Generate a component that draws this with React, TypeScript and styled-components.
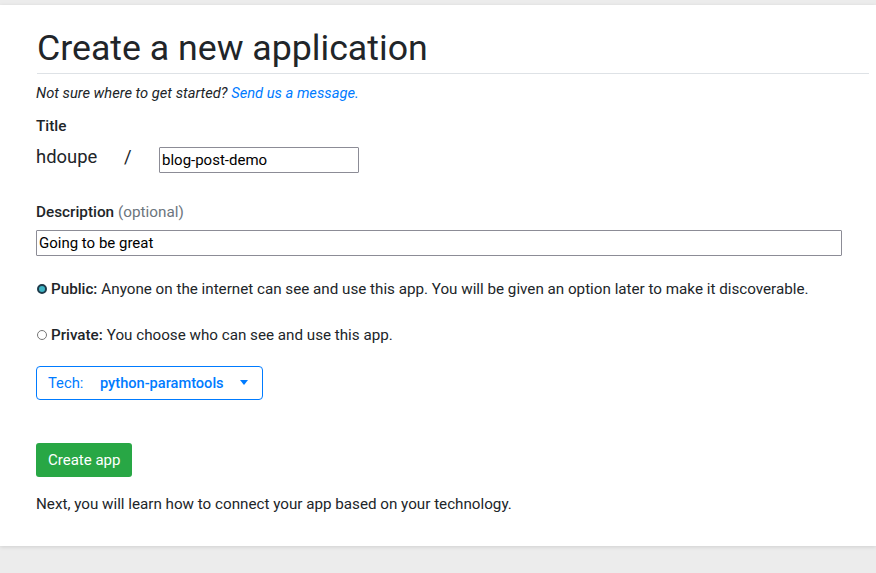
import React from "react";
import styled, { createGlobalStyle } from "styled-components";

const Global = createGlobalStyle`
  html, body { margin: 0; padding: 0; background: #ececec; }
  body { font-family: Roboto, "Liberation Sans", sans-serif; color: #212529; }
  * { box-sizing: border-box; }
`;

const Page = styled.div`
  padding-top: 5px;
  border-top: 4px solid #e6e6e6;
  margin-top: -4px;
  min-height: 573px;
`;

const Card = styled.main`
  background: #fff;
  box-shadow: 0 1px 4px rgba(0, 0, 0, 0.12);
  padding: 22px 7px 26px 36px;
  height: 541px;
`;

const Heading = styled.h1`
  font-size: 35.7px;
  font-weight: 400;
  line-height: 1.2;
  margin: 0 0 10px 1px;
  padding-bottom: 3px;
  border-bottom: 1px solid #dee2e6;
`;

const Hint = styled.p`
  font-style: italic;
  font-size: 14.7px;
  margin: 0 0 15px;
`;

const Link = styled.a`
  color: #007bff;
  text-decoration: none;
`;

const Label = styled.div`
  font-size: 15.3px;
  font-weight: 500;
  margin-bottom: 9px;
`;

const Muted = styled.span`
  color: #6c757d;
  font-weight: 400;
`;

const TitleRow = styled.div`
  display: flex;
  align-items: flex-start;
  margin-bottom: 30px;
`;

const Owner = styled.span`
  font-size: 18.4px;
  line-height: 26px;
  width: 88px;
`;

const Slash = styled.span`
  font-size: 18.4px;
  line-height: 26px;
  width: 35px;
`;

const TextInput = styled.input<{ $w: number; $drop?: number }>`
  width: ${(p) => p.$w}px;
  height: 26px;
  margin-top: ${(p) => p.$drop ?? 0}px;
  border: 1px solid #8c8c96;
  border-radius: 1px;
  font-family: Roboto, "Liberation Sans", sans-serif;
  font-size: 15px;
  padding: 0 2px;
  color: #000;
  outline: none;
`;

const Field = styled.div`
  margin-bottom: 24px;
`;

const RadioRow = styled.label`
  display: flex;
  align-items: center;
  font-size: 15.2px;
  margin-bottom: 28px;
`;

const Radio = styled.span<{ $on?: boolean }>`
  width: 10px;
  height: 10px;
  border-radius: 50%;
  margin: 0 4px 0 1px;
  border: ${(p) => (p.$on ? "2px solid #1e3a4a" : "1px solid #767676")};
  background: ${(p) => (p.$on ? "#3fb5c5" : "#fff")};
`;

const Bold = styled.b`
  font-weight: 500;
  margin-right: 4px;
`;

const Select = styled.button`
  display: flex;
  align-items: center;
  width: 227px;
  height: 34px;
  border: 1px solid #007bff;
  border-radius: 4px;
  background: #fff;
  color: #007bff;
  font-family: Roboto, "Liberation Sans", sans-serif;
  font-size: 14.8px;
  padding: 0 14px 0 11px;
  margin-top: -6px;
  margin-bottom: 43px;
`;

const SelectLabel = styled.span`
  width: 52px;
  text-align: left;
`;

const SelectValue = styled.span`
  font-weight: 500;
  font-size: 14.6px;
  flex: 1;
  text-align: left;
`;

const Caret = styled.span`
  width: 0;
  height: 0;
  border-left: 4px solid transparent;
  border-right: 4px solid transparent;
  border-top: 5px solid #007bff;
`;

const Primary = styled.button`
  background: #28a745;
  color: #fff;
  border: none;
  border-radius: 3px;
  height: 34px;
  padding: 0 12px;
  font-family: Roboto, "Liberation Sans", sans-serif;
  font-size: 15px;
  margin-bottom: 18px;
`;

const Next = styled.p`
  font-size: 15.2px;
  margin: 0;
`;

export default function App() {
  return (
    <>
      <Global />
      <Page>
        <Card>
          <Heading>Create a new application</Heading>
          <Hint>
            Not sure where to get started? <Link href="#">Send us a message.</Link>
          </Hint>
          <Label>Title</Label>
          <TitleRow>
            <Owner>hdoupe</Owner>
            <Slash>/</Slash>
            <TextInput $w={200} $drop={3} defaultValue="blog-post-demo" />
          </TitleRow>
          <Field>
            <Label>
              Description <Muted>(optional)</Muted>
            </Label>
            <TextInput $w={806} defaultValue="Going to be great" />
          </Field>
          <RadioRow>
            <Radio $on />
            <Bold>Public:</Bold>
            Anyone on the internet can see and use this app. You will be given an option later to make it discoverable.
          </RadioRow>
          <RadioRow>
            <Radio />
            <Bold>Private:</Bold>
            You choose who can see and use this app.
          </RadioRow>
          <Select>
            <SelectLabel>Tech:</SelectLabel>
            <SelectValue>python-paramtools</SelectValue>
            <Caret />
          </Select>
          <Primary>Create app</Primary>
          <Next>Next, you will learn how to connect your app based on your technology.</Next>
        </Card>
      </Page>
    </>
  );
}
